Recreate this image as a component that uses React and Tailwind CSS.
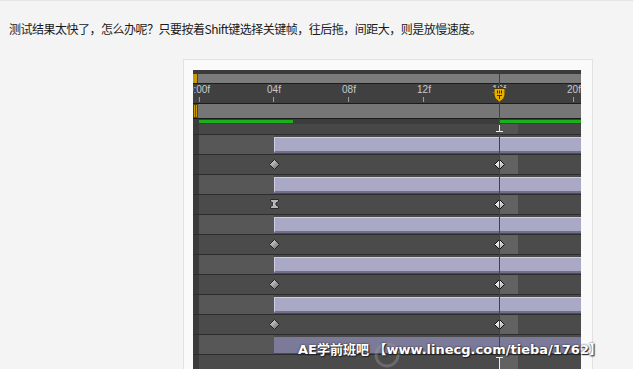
import React from "react";

const TICKS = [
  { x: 6, t: "0:00f" },
  { x: 81, t: "04f" },
  { x: 156, t: "08f" },
  { x: 231, t: "12f" },
  { x: 306, t: "16f" },
  { x: 381, t: "20f" },
];

function Diamond({ light }) {
  const id = light ? "dl" : "dd";
  return (
    <svg width="11" height="11" viewBox="0 0 11 11" className="block">
      <defs>
        <linearGradient id={id} x1="0" y1="0" x2="1" y2="1">
          <stop offset="0" stopColor={light ? "#ffffff" : "#e6e6e6"} />
          <stop offset="0.5" stopColor={light ? "#d8d8d8" : "#a0a0a0"} />
          <stop offset="1" stopColor={light ? "#8a8a8a" : "#5a5a5a"} />
        </linearGradient>
      </defs>
      <polygon points="5.5,0.5 10.5,5.5 5.5,10.5 0.5,5.5" fill={`url(#${id})`} stroke={light ? "#111" : "#222"} strokeWidth="1" />
    </svg>
  );
}

function Hourglass() {
  return (
    <svg width="9" height="10" viewBox="0 0 9 10" className="block">
      <path d="M0.5 0.5 H8.5 V2.5 L6 4 V6 L8.5 7.5 V9.5 H0.5 V7.5 L3 6 V4 L0.5 2.5 Z" fill="#b5b5b5" stroke="#2a2a2a" strokeWidth="1" />
      <path d="M3.5 4.5 V6" stroke="#eaeaea" strokeWidth="1" />
    </svg>
  );
}

function Line() {
  return <div className="h-px bg-[#2d2d2d]" />;
}

function BarRow({ dark }) {
  return (
    <>
      <Line />
      <div className="flex h-[19px] bg-[#4b4b4b]">
        <div className="w-[6px] bg-[#3b3b3b]" />
        <div className="w-[75px] bg-[#575757]" />
        <div className="flex-1 pt-[2px] pb-[1px]">
          {dark ? (
            <div className="h-[16px] bg-[#7c7a99]" />
          ) : (
            <div className="h-[16px] bg-[#a9a8c5] border-t border-l border-[#cfcee0] border-b-2 border-b-[#727089]" />
          )}
        </div>
      </div>
    </>
  );
}

function KeyRow({ kind, noKeys }) {
  return (
    <>
      <Line />
      <div className="relative flex h-[19px] bg-[#4b4b4b]">
        <div className="w-[6px] bg-[#3b3b3b]" />
        <div className="w-[301px]" />
        <div className="w-[18px] bg-[#626262]" />
        {!noKeys && (
          <>
            <div className="absolute left-[76px] top-[4px]">
              {kind === "hold" ? <div className="pl-[1px]"><Hourglass /></div> : <Diamond />}
            </div>
            <div className="absolute left-[301px] top-[4px]">
              <Diamond light />
            </div>
          </>
        )}
      </div>
    </>
  );
}

function Timeline() {
  return (
    <div className="relative w-[388px] h-[320px] overflow-hidden bg-[#444]" style={{ fontFamily: '"Liberation Sans", Arial, sans-serif' }}>
      <div className="h-[4px] bg-[#3a3a3a]" />
      <div className="flex h-[9px] bg-[#7b7b7b]">
        <div className="w-[5px] h-[9px] bg-[#c89a00] border-r border-[#5a4300]" />
      </div>
      <div className="h-px bg-[#1c1c1c]" />
      <div className="relative h-[19px] bg-[#404040]">
        {TICKS.map((k) => (
          <div key={k.t} className="absolute top-0 flex flex-col items-center -translate-x-1/2" style={{ left: k.x }}>
            <span className="text-[10px] leading-[12px] text-[#c9c9c9] whitespace-nowrap">{k.t}</span>
            <div className="mt-[1px] w-px h-[5px] bg-[#a0a0a0]" />
          </div>
        ))}
      </div>
      <div className="h-px bg-[#1c1c1c]" />
      <div className="flex h-[14px] bg-[#767676]">
        <div className="w-[5px] h-[14px] bg-[#c89a00] border border-[#5a4300] flex justify-center">
          <div className="w-px bg-[#6b5200]" />
        </div>
      </div>
      <div className="h-px bg-[#1c1c1c]" />
      <div className="flex h-[5px] bg-[#3c3c3c] pt-px pb-px">
        <div className="w-[6px]" />
        <div className="w-[94px] bg-[#1cb01c]" />
        <div className="w-[206px]" />
        <div className="flex-1 bg-[#1cb01c]" />
      </div>
      <div className="flex h-[10px] bg-[#474747]">
        <div className="w-[6px] bg-[#3b3b3b]" />
        <div className="w-[301px]" />
        <div className="w-[18px] bg-[#545454]" />
      </div>
      <BarRow />
      <KeyRow />
      <BarRow />
      <KeyRow kind="hold" />
      <BarRow />
      <KeyRow />
      <BarRow />
      <KeyRow />
      <BarRow />
      <KeyRow />
      <BarRow dark />
      <KeyRow noKeys />

      {/* CTI red line */}
      <div className="absolute left-[306px] top-[4px] bottom-0 w-px bg-[#e00000]" />
      {/* I-beam marker (top) */}
      <div className="absolute left-[303px] top-[55px]">
        <svg width="7" height="7" viewBox="0 0 7 7" className="block">
          <path d="M3.5 0 V6 M0 6.5 H7" stroke="#ececec" strokeWidth="1" />
        </svg>
      </div>
      {/* CTI head */}
      <div className="absolute left-[300px] top-[17px]">
        <svg width="13" height="16" viewBox="0 0 13 16" className="block">
          <path d="M1 1.5 H12 V8 Q12 12 6.5 15 Q1 12 1 8 Z" fill="#e6b000" stroke="#4a3600" strokeWidth="1" />
          <path d="M4.5 3.5 V6.5 M6.5 3.5 V6.5 M8.5 3.5 V6.5 M4 8.5 H9 M6.5 8.5 V12" stroke="#3d2c00" strokeWidth="1" />
        </svg>
      </div>
      {/* I-beam at bottom */}
      <div className="absolute left-[303px] top-[287px]">
        <svg width="7" height="14" viewBox="0 0 7 14" className="block">
          <path d="M0 0.5 H7 M3.5 0 V14" stroke="#ececec" strokeWidth="1" />
        </svg>
      </div>
    </div>
  );
}

export default function App() {
  return (
    <div className="relative w-[633px] h-[369px] overflow-hidden bg-[#f4f4f4] border-t border-[#e4e4e4]">
      <p
        className="pl-[9px] pt-[20px] text-[12px] leading-[16px] tracking-[-0.5px] text-[#1a1a1a] whitespace-nowrap"
        style={{ fontFamily: '"Noto Sans CJK SC", "Noto Sans", sans-serif' }}
      >
        测试结果太快了，怎么办呢？只要按着Shift键选择关键帧，往后拖，间距大，则是放慢速度。
      </p>
      <div className="relative ml-[183px] mt-[22px] w-[410px] h-[340px] border border-[#e2e2e2] bg-[#fafafa] pt-[10px] pl-[9px]">
        <Timeline />
        <div className="absolute left-[190px] top-[282px] opacity-40">
          <svg width="26" height="26" viewBox="0 0 26 26">
            <circle cx="13" cy="13" r="11" fill="none" stroke="#9a9a9a" strokeWidth="3" />
          </svg>
        </div>
        <div
          className="absolute left-[114px] top-[282px] text-[13px] leading-[16px] font-bold text-white whitespace-nowrap"
          style={{
            fontFamily: '"DejaVu Sans", "Noto Sans CJK SC", sans-serif',
            textShadow: "0 0 2px #222, 1px 1px 1px #222",
          }}
        >
          AE学前班吧 【www.linecg.com/tieba/1762】
        </div>
      </div>
    </div>
  );
}
